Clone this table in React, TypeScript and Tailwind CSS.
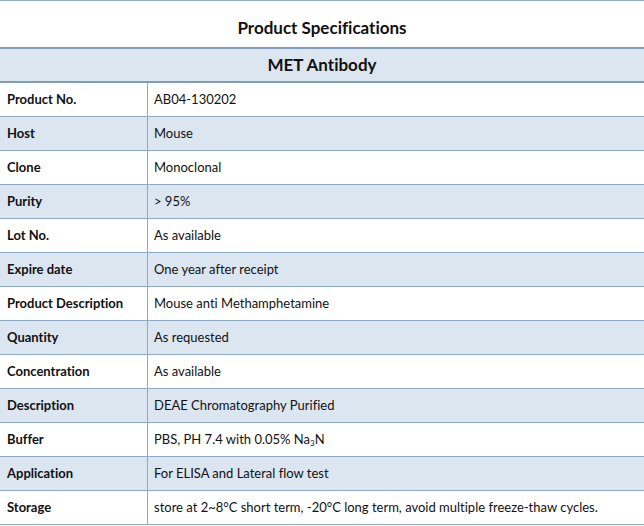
import React from "react";

const rows: { label: string; value: React.ReactNode }[] = [
  { label: "Product No.", value: "AB04-130202" },
  { label: "Host", value: "Mouse" },
  { label: "Clone", value: "Monoclonal" },
  { label: "Purity", value: "> 95%" },
  { label: "Lot No.", value: "As available" },
  { label: "Expire date", value: "One year after receipt" },
  { label: "Product Description", value: "Mouse anti Methamphetamine" },
  { label: "Quantity", value: "As requested" },
  { label: "Concentration", value: "As available" },
  { label: "Description", value: "DEAE Chromatography Purified" },
  {
    label: "Buffer",
    value: (
      <>
        PBS, PH 7.4 with 0.05% Na<sub className="text-[8px]">3</sub>N
      </>
    ),
  },
  { label: "Application", value: "For ELISA and Lateral flow test" },
  {
    label: "Storage",
    value:
      "store at 2~8°C short term, -20°C long term, avoid multiple freeze-thaw cycles.",
  },
];

const App = () => {
  return (
    <div
      className="w-[644px] h-[526px] bg-white text-[#111] overflow-hidden [font-variant-ligatures:none]"
      style={{ fontFamily: "Lato, 'Open Sans', sans-serif" }}
    >
      {/* Title */}
      <div className="border-t border-[#8eaacb] h-[47px] pt-[8px] flex items-center justify-center text-[17px] font-bold">
        Product Specifications
      </div>

      {/* Header */}
      <div className="border-t-2 border-b-2 border-[#7f9cc0] bg-[#dce6f1] h-[36px] flex items-center justify-center text-[17px] font-bold">
        MET Antibody
      </div>

      {/* Rows */}
      {rows.map((row, i) => (
        <div
          key={row.label}
          className={`flex h-[34px] border-b border-[#8eaacb] text-[13px] ${
            i % 2 === 1 ? "bg-[#dce6f1]" : "bg-white"
          }`}
        >
          <div className="w-[148px] shrink-0 flex items-center pl-[7px] font-bold border-r border-[#8eaacb]">
            {row.label}
          </div>
          <div className="flex-1 flex items-center pl-[6px] whitespace-nowrap">
            <span>{row.value}</span>
          </div>
        </div>
      ))}
    </div>
  );
};

export default App;
